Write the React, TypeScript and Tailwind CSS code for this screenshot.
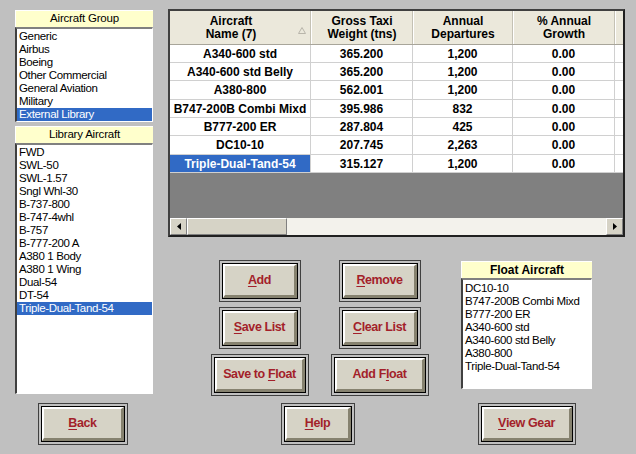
import React from "react";

const font = { fontFamily: '"Liberation Sans", Arial, sans-serif' };

const groups = ["Generic", "Airbus", "Boeing", "Other Commercial", "General Aviation", "Military", "External Library"];
const library = [
  "FWD", "SWL-50", "SWL-1.57", "Sngl Whl-30", "B-737-800", "B-747-4whl", "B-757",
  "B-777-200 A", "A380 1 Body", "A380 1 Wing", "Dual-54", "DT-54", "Triple-Dual-Tand-54",
];
const floats = ["DC10-10", "B747-200B Combi Mixd", "B777-200 ER", "A340-600 std", "A340-600 std Belly", "A380-800", "Triple-Dual-Tand-54"];

const rows = [
  { name: "A340-600 std", w: "365.200", d: "1,200", g: "0.00", h: "h-[18px]" },
  { name: "A340-600 std Belly", w: "365.200", d: "1,200", g: "0.00", h: "h-[18px]" },
  { name: "A380-800", w: "562.001", d: "1,200", g: "0.00", h: "h-[19px]" },
  { name: "B747-200B Combi Mixd", w: "395.986", d: "832", g: "0.00", h: "h-[18px]" },
  { name: "B777-200 ER", w: "287.804", d: "425", g: "0.00", h: "h-[18px]" },
  { name: "DC10-10", w: "207.745", d: "2,263", g: "0.00", h: "h-[19px]" },
  { name: "Triple-Dual-Tand-54", w: "315.127", d: "1,200", g: "0.00", h: "h-[18px]", sel: true },
];

function ListHeader({ children, bold }: { children: React.ReactNode; bold?: boolean }) {
  return (
    <div
      className={`h-[17px] bg-[#ffffcc] border-t border-l border-t-white border-l-white flex items-center justify-center text-black ${
        bold ? "font-bold text-[12px]" : "text-[11.5px] tracking-[-0.2px]"
      }`}
    >
      {children}
    </div>
  );
}

function ListBox({ items, selected, className }: { items: string[]; selected?: string; className: string }) {
  return (
    <div
      className={`bg-white border-t-2 border-l-2 border-t-[#808080] border-l-[#404040] border-r border-b border-r-white border-b-white pt-[1px] overflow-hidden ${className}`}
    >
      {items.map((it) => (
        <div
          key={it}
          className={`h-[13px] leading-[13px] pl-[2px] text-[11.5px] tracking-[-0.35px] whitespace-nowrap ${
            it === selected ? "bg-[#316ac5] text-white" : "text-black"
          }`}
        >
          {it}
        </div>
      ))}
    </div>
  );
}

function Btn({ w, pre, u, post }: { w: string; pre?: string; u: string; post?: string }) {
  return (
    <div className={`${w} h-[42px] border border-[#404040] p-[2px] bg-[#c0c0c0]`}>
      <div className="h-full border border-black">
        <div className="h-full border-t-2 border-l-2 border-t-white border-l-white border-b-[3px] border-r-[3px] border-b-[#86826f] border-r-[#86826f] bg-[#d6d3c6] flex items-center justify-center text-[#a31f2a] font-bold text-[12.5px] tracking-[-0.4px] whitespace-pre">
          {pre}
          <span className="underline underline-offset-2">{u}</span>
          {post}
        </div>
      </div>
    </div>
  );
}

function Grid() {
  const cols = ["w-[141px]", "w-[102px]", "w-[100px]", "w-[102px]"];
  return (
    <div className="w-[457px] h-[228px] border-2 border-t-[#404040] border-l-[#404040] border-r-[#202020] border-b-[#202020] bg-[#808080] flex flex-col">
      <div className="h-[34px] flex bg-[#ebe8db] border-b border-b-[#a8a59a] text-[12px] font-bold leading-[13px] text-black">
        <div className={`${cols[0]} relative border-r border-r-[#c4c1b4] flex items-center justify-center pr-[18px] text-center`}>
          <span>
            Aircraft
            <br />
            Name (7)
          </span>
          <svg className="absolute left-[128px] top-[16px]" width="8" height="7" viewBox="0 0 8 7">
            <path d="M4 0.5 L7.5 6.5 L0.5 6.5 Z" fill="none" stroke="#b8b5aa" strokeWidth="1" />
          </svg>
        </div>
        <div className={`${cols[1]} border-r border-r-[#c4c1b4] border-l border-l-white flex items-center justify-center text-center`}>
          <span>
            Gross Taxi
            <br />
            Weight (tns)
          </span>
        </div>
        <div className={`${cols[2]} border-r border-r-[#c4c1b4] border-l border-l-white flex items-center justify-center text-center`}>
          <span>
            Annual
            <br />
            Departures
          </span>
        </div>
        <div className={`${cols[3]} border-r border-r-[#c4c1b4] border-l border-l-white flex items-center justify-center text-center`}>
          <span>
            % Annual
            <br />
            Growth
          </span>
        </div>
        <div className="flex-1 border-l border-l-white" />
      </div>
      {rows.map((r) => (
        <div key={r.name} className={`${r.h} flex bg-white text-[12px] font-bold text-black`}>
          <div
            className={`${cols[0]} border-r border-b border-[#d0d0d0] flex items-center justify-center whitespace-nowrap ${
              r.sel ? "bg-[#316ac5] text-white" : ""
            }`}
          >
            {r.name}
          </div>
          <div className={`${cols[1]} border-r border-b border-[#d0d0d0] flex items-center justify-center`}>{r.w}</div>
          <div className={`${cols[2]} border-r border-b border-[#d0d0d0] flex items-center justify-center`}>{r.d}</div>
          <div className={`${cols[3]} border-r border-b border-[#d0d0d0] flex items-center justify-center`}>{r.g}</div>
          <div className="flex-1 border-b border-[#d0d0d0]" />
        </div>
      ))}
      <div className="flex-1" />
      <div className="h-[17px] flex bg-[#f3f2ec]">
        <div className="w-[17px] h-[17px] bg-[#d6d3c6] border border-t-white border-l-white border-r-[#808080] border-b-[#808080] flex items-center justify-center">
          <svg width="4" height="7" viewBox="0 0 4 7">
            <path d="M4 0 L0 3.5 L4 7 Z" fill="#000" />
          </svg>
        </div>
        <div className="w-[100px] h-[17px] bg-[#d6d3c6] border border-t-white border-l-white border-r-[#808080] border-b-[#808080]" />
        <div className="flex-1" />
        <div className="w-[17px] h-[17px] bg-[#d6d3c6] border border-t-white border-l-white border-r-[#808080] border-b-[#808080] flex items-center justify-center">
          <svg width="4" height="7" viewBox="0 0 4 7">
            <path d="M0 0 L4 3.5 L0 7 Z" fill="#000" />
          </svg>
        </div>
      </div>
    </div>
  );
}

export default function App() {
  return (
    <div className="w-[636px] h-[454px] bg-[#c0c0c0] flex overflow-hidden" style={font}>
      {/* left column */}
      <div className="ml-[15px] mt-[10px] w-[138px] flex flex-col">
        <ListHeader>Aircraft Group</ListHeader>
        <ListBox items={groups} selected="External Library" className="h-[95px]" />
        <div className="mt-[4px]">
          <ListHeader>Library Aircraft</ListHeader>
        </div>
        <ListBox items={library} selected="Triple-Dual-Tand-54" className="h-[251px]" />
        <div className="mt-[9px] ml-[23px]">
          <Btn w="w-[90px]" u="B" post="ack" />
        </div>
      </div>

      {/* right column */}
      <div className="ml-[15px] mt-[9px] flex flex-col">
        <Grid />
        <div className="mt-[23px] flex">
          <div className="ml-[43px] w-[98px] flex flex-col items-center gap-[5px]">
            <Btn w="w-[82px]" u="A" post="dd" />
            <Btn w="w-[82px]" u="S" post="ave List" />
            <Btn w="w-[98px]" pre="Save to " u="F" post="loat" />
          </div>
          <div className="ml-[22px] w-[98px] flex flex-col items-center gap-[5px]">
            <Btn w="w-[82px]" u="R" post="emove" />
            <Btn w="w-[82px]" u="C" post="lear List" />
            <Btn w="w-[98px]" pre="Add F" u="l" post="oat" />
          </div>
          <div className="ml-[32px] mt-[1px] w-[131px] flex flex-col">
            <ListHeader bold>Float Aircraft</ListHeader>
            <ListBox items={floats} className="h-[111px] pt-[2px]" />
          </div>
        </div>
        <div className="mt-[7px] flex">
          <div className="ml-[113px]">
            <Btn w="w-[74px]" u="H" post="elp" />
          </div>
          <div className="ml-[123px]">
            <Btn w="w-[98px]" u="V" post="iew Gear" />
          </div>
        </div>
      </div>
    </div>
  );
}
